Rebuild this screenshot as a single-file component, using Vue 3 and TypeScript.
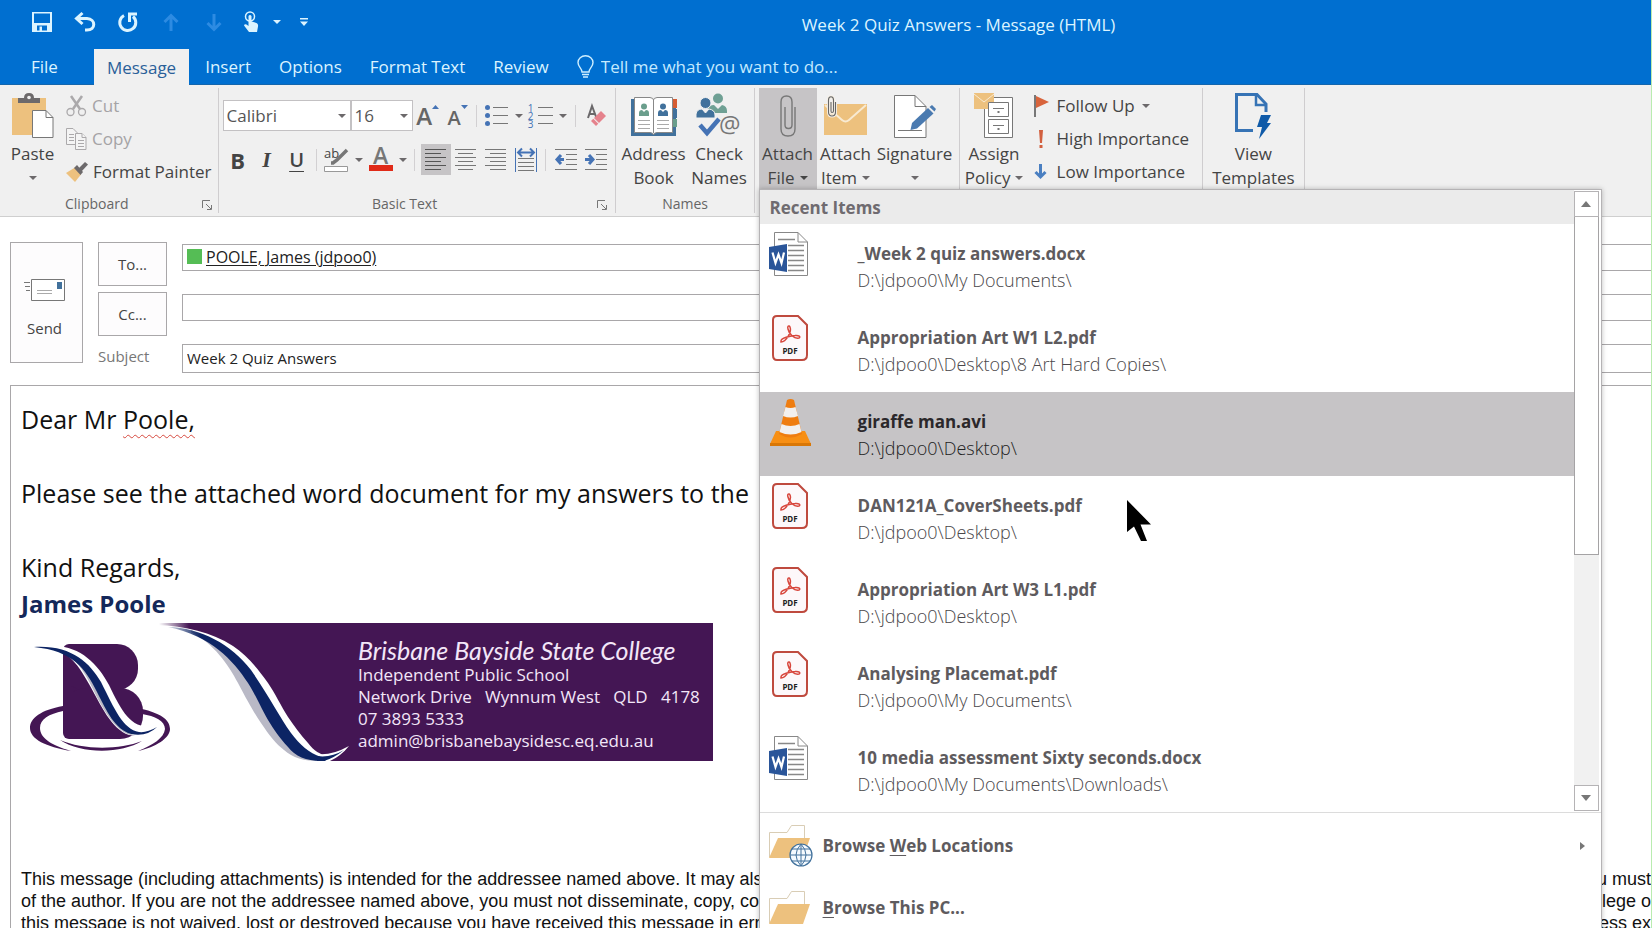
<script setup lang="ts">
import { ref } from 'vue'

type FileKind = 'word' | 'pdf' | 'video'
interface RecentItem { name: string; path: string; kind: FileKind }

const tabs = ['Insert', 'Options', 'Format Text', 'Review']

const recentItems: RecentItem[] = [
  { name: '_Week 2 quiz answers.docx', path: 'D:\\jdpoo0\\My Documents\\', kind: 'word' },
  { name: 'Appropriation Art W1 L2.pdf', path: 'D:\\jdpoo0\\Desktop\\8 Art Hard Copies\\', kind: 'pdf' },
  { name: 'giraffe man.avi', path: 'D:\\jdpoo0\\Desktop\\', kind: 'video' },
  { name: 'DAN121A_CoverSheets.pdf', path: 'D:\\jdpoo0\\Desktop\\', kind: 'pdf' },
  { name: 'Appropriation Art W3 L1.pdf', path: 'D:\\jdpoo0\\Desktop\\', kind: 'pdf' },
  { name: 'Analysing Placemat.pdf', path: 'D:\\jdpoo0\\My Documents\\', kind: 'pdf' },
  { name: '10 media assessment Sixty seconds.docx', path: 'D:\\jdpoo0\\My Documents\\Downloads\\', kind: 'word' },
]
const active = ref(2)

const legal = [
  ['This message (including attachments) is intended for the addressee named above. It may also', 'you must'],
  ['of the author. If you are not the addressee named above, you must not disseminate, copy, communicate', 'privilege o'],
  ['this message is not waived, lost or destroyed because you have received this message in error', 'unless ex'],
]
const address = 'Network Drive \u00a0 Wynnum West \u00a0 QLD \u00a0 4178'
const subject = ref('Week 2 Quiz Answers')
const cc = ref('')
</script>

<template>
  <div class="window">
    <header class="chrome">
      <div class="titlebar">
        <button class="qat" aria-label="Save">
          <svg width="20" height="20" viewBox="0 0 20 20"><path d="M0 0H20V20H0Z" fill="#dcf4ff" /><path d="M2 1.500H18V11H2Z" fill="#006fd0" /><path d="M5 13.500H15V18.500H5Z" fill="#006fd0" /><path d="M7.500 14.500H10V19H7.500Z" fill="#dcf4ff" /></svg>
        </button>
        <button class="qat" aria-label="Undo">
          <svg width="22" height="20" viewBox="0 0 22 20" fill="none" stroke="#dcf4ff" stroke-width="3"><path d="M2 6.500H13C22 7 22 18 13 18H11" /><path d="M8.500 1L2.500 6.500L8.500 12" /></svg>
        </button>
        <button class="qat" aria-label="Redo">
          <svg width="20" height="20" viewBox="0 0 20 20" fill="none" stroke="#dcf4ff" stroke-width="3"><path d="M6 3.500A8 8 0 1 0 15 4.500" /><path d="M11.500 10V2H19" /></svg>
        </button>
        <button class="qat" aria-label="Previous item" disabled>
          <svg width="16" height="19" viewBox="0 0 16 19" fill="none" stroke="#2d8be2" stroke-width="3"><path d="M8 18V2M1.500 9L8 2.500L14.500 9" /></svg>
        </button>
        <button class="qat" aria-label="Next item" disabled>
          <svg width="16" height="19" viewBox="0 0 16 19" fill="none" stroke="#2d8be2" stroke-width="3"><path d="M8 1V17M1.500 10L8 16.500L14.500 10" /></svg>
        </button>
        <button class="qat touch" aria-label="Touch mode">
          <svg width="16" height="22" viewBox="0 0 16 22"><circle cx="7" cy="5.500" r="4.500" fill="none" stroke="#dcf4ff" stroke-width="1.500" /><path d="M5.500 5Q7 3 8.500 5V10.500L13.500 12Q15.500 13 15 15.500L14 21H6L1 14.500Q1.500 12.500 3.500 13.500L5.500 15Z" fill="#dcf4ff" /></svg>
          <svg class="caret light" width="8" height="4" viewBox="0 0 8 4"><path d="M0 0H8L4 4Z" /></svg>
        </button>
        <button class="qat custom" aria-label="Customize toolbar">
          <svg width="8" height="8" viewBox="0 0 8 8" fill="#dcf4ff"><path d="M0 0H8V1.500H0ZM0 3.500H8L4 8Z" /></svg>
        </button>
        <h1>Week 2 Quiz Answers - Message (HTML)</h1>
      </div>
      <nav class="tabs">
        <button class="tab file">File</button>
        <button class="tab current">Message</button>
        <button v-for="tab in tabs" :key="tab" class="tab">{{ tab }}</button>
        <label class="tell">
          <svg width="17" height="23" viewBox="0 0 17 23" fill="none" stroke="#cdeeff" stroke-width="1.400"><path d="M5 17C5 13 1 12 1 7.500A7.500 6.800 0 0 1 16 7.500C16 12 12 13 12 17Z" /><path d="M5 19.500H12M6 22H11" /></svg>
          <input type="text" placeholder="Tell me what you want to do..." aria-label="Tell me what you want to do" />
        </label>
      </nav>
    </header>

    <div class="ribbon">
      <section class="group clipboard">
        <div class="controls">
          <button class="big paste">
            <span class="pic"><svg width="42" height="46" viewBox="0 0 42 46"><path d="M0 5H34V42H0Z" fill="#edc17e" /><path d="M6 10V5H12Q12 0 17 0Q22 0 22 5H28V10Z" fill="#6c696b" /><circle cx="17" cy="4.500" r="1.800" fill="#f0f0f0" /><path d="M20.500 17.500H34L41 24.500V44.500H20.500Z" fill="#fff" stroke="#777" /><path d="M34 17.500V24.500H41" fill="none" stroke="#777" /></svg></span>
            <span>Paste</span>
            <svg class="caret" width="8" height="4" viewBox="0 0 8 4"><path d="M0 0H8L4 4Z" /></svg>
          </button>
          <div class="stack">
            <button class="small" disabled>
              <svg width="21" height="22" viewBox="0 0 21 22" fill="none" stroke="#aba9ab" stroke-width="2"><path d="M5 1L14 14M16 1L7 14" stroke-width="2.500" /><circle cx="4.500" cy="17" r="3.500" stroke-width="1.300" /><circle cx="16" cy="17" r="3.500" stroke-width="1.300" /></svg>Cut
            </button>
            <button class="small" disabled>
              <svg width="21" height="22" viewBox="0 0 21 22" fill="#f4f4f4" stroke="#aba9ab"><path d="M.5.500H7L11 4.500V16.500H.5Z" /><path d="M3 6.500H8M3 9.500H8M3 12.500H8" /><path d="M9.500 5.500H16L20 9.500V21.500H9.500Z" /><path d="M16 5.500V9.500H20M12 12.500H18M12 15.500H18M12 18.500H18" /></svg>Copy
            </button>
            <button class="small">
              <svg width="22" height="20" viewBox="0 0 22 20"><path d="M0 11L9 5.500L15 12.500L9 20Z" fill="#edc17e" /><path d="M8 6L11 3L17 10L14.500 13Z" fill="#6c696b" /><path d="M12.500 6.500L19 0L22 2.500L15.500 9.500Z" fill="#6c696b" /></svg>Format Painter
            </button>
          </div>
        </div>
        <div class="caption">Clipboard<button class="launcher" aria-label="Clipboard options"><svg width="10" height="10" viewBox="0 0 10 10" fill="none" stroke="#777"><path d="M.5 8V.5H8M4 4L9 9M9.500 5V9.500H5" /></svg></button></div>
      </section>

      <section class="group text">
        <div class="controls rows">
          <div class="row">
            <span class="combo font"><select aria-label="Font"><option>Calibri</option></select><svg class="caret" width="8" height="4" viewBox="0 0 8 4"><path d="M0 0H8L4 4Z" /></svg></span>
            <span class="combo size"><select aria-label="Font size"><option>16</option></select><svg class="caret" width="8" height="4" viewBox="0 0 8 4"><path d="M0 0H8L4 4Z" /></svg></span>
            <button class="tool grow" aria-label="Increase font size"><b>A</b><svg width="7" height="4" viewBox="0 0 7 4"><path d="M0 4H7L3.500 0Z" fill="#4573b5" /></svg></button>
            <button class="tool grow less" aria-label="Decrease font size"><b>A</b><svg width="7" height="4" viewBox="0 0 7 4"><path d="M0 0H7L3.500 4Z" fill="#4573b5" /></svg></button>
            <i class="rule r8"></i>
            <button class="tool list" aria-label="Bullets"><svg width="23" height="21" viewBox="0 0 23 21"><g fill="#4573b5"><circle cx="2.500" cy="2.500" r="2.500" /><circle cx="2.500" cy="10.500" r="2.500" /><circle cx="2.500" cy="18.500" r="2.500" /></g><path d="M8 2.500H23M8 10.500H23M8 18.500H23" stroke="#777" /></svg></button>
            <button class="drop" aria-label="Bullet options"><svg class="caret" width="8" height="4" viewBox="0 0 8 4"><path d="M0 0H8L4 4Z" /></svg></button>
            <button class="tool list" aria-label="Numbering"><span class="digits"><span>1</span><span>2</span><span>3</span></span><svg width="15" height="21" viewBox="0 0 15 21"><path d="M0 2.500H15M0 10.500H15M0 18.500H15" stroke="#777" /></svg></button>
            <button class="drop" aria-label="Numbering options"><svg class="caret" width="8" height="4" viewBox="0 0 8 4"><path d="M0 0H8L4 4Z" /></svg></button>
            <i class="rule r14"></i>
            <button class="tool clear" aria-label="Clear formatting"><svg width="19" height="21" viewBox="0 0 19 21"><path d="M1 13L5 1L9.500 13M2.500 9H8" fill="none" stroke="#6a686a" stroke-width="2" /><path d="M14 6L19 11L12 18L7 13Z" fill="#e5828c" /><path d="M6.300 13.700L11.300 18.700L9 21L4 16Z" fill="#e5828c" /></svg></button>
          </div>
          <div class="row">
            <button class="tool bold">B</button>
            <button class="tool italic">I</button>
            <button class="tool under">U</button>
            <i class="rule r8"></i>
            <button class="tool w32" aria-label="Highlight"><svg width="25" height="24" viewBox="0 0 25 24"><text x="0" y="10" font-family="Open Sans, sans-serif" font-size="13" fill="#444">ab</text><path d="M23 2L13 12L9 15L7 15" fill="none" stroke="#777" stroke-width="3.500" /><path d="M.5 18.500H23.500V23.500H.5Z" fill="#fff" stroke="#999" /></svg></button>
            <button class="drop" aria-label="Highlight colours"><svg class="caret" width="8" height="4" viewBox="0 0 8 4"><path d="M0 0H8L4 4Z" /></svg></button>
            <button class="tool w32 colour" aria-label="Font colour">A</button>
            <button class="drop" aria-label="Font colours"><svg class="caret" width="8" height="4" viewBox="0 0 8 4"><path d="M0 0H8L4 4Z" /></svg></button>
            <i class="rule r12"></i>
            <button class="tool on" aria-label="Align left"><svg width="21" height="22" viewBox="0 0 21 22" stroke="#555"><path d="M0 .5H21M0 4.500H16M0 8.500H21M0 12.500H16M0 16.500H21M0 20.500H16" /></svg></button>
            <button class="tool" aria-label="Centre"><svg width="21" height="22" viewBox="0 0 21 22" stroke="#777"><path d="M0 .5H21M3 4.500H18M0 8.500H21M3 12.500H18M0 16.500H21M3 20.500H18" /></svg></button>
            <button class="tool" aria-label="Align right"><svg width="21" height="22" viewBox="0 0 21 22" stroke="#777"><path d="M0 .5H21M5 4.500H21M0 8.500H21M5 12.500H21M0 16.500H21M5 20.500H21" /></svg></button>
            <button class="tool" aria-label="Justify"><svg width="22" height="24" viewBox="0 0 22 24" fill="none" stroke="#777"><path d="M3 10.500H19M3 14.500H19M3 18.500H19M3 22.500H19" /><path d="M.5 0V24M21.500 0V24" stroke="#4573b5" /><path d="M3 4.500H19M7 .500L3 4.500L7 8.500M15 .500L19 4.500L15 8.500" stroke="#4573b5" stroke-width="2" /></svg></button>
            <i class="rule r10"></i>
            <button class="tool" aria-label="Decrease indent"><svg width="22" height="22" viewBox="0 0 22 22" fill="none" stroke="#777"><path d="M0 .5H22M11 5.500H22M11 10.500H22M11 15.500H22M0 20.500H22" /><path d="M9 10.500H3M6 6L2 10.500L6 15" stroke="#4573b5" stroke-width="3" /></svg></button>
            <button class="tool" aria-label="Increase indent"><svg width="22" height="22" viewBox="0 0 22 22" fill="none" stroke="#777"><path d="M0 .5H22M11 5.500H22M11 10.500H22M11 15.500H22M0 20.500H22" /><path d="M0 10.500H6M4 6L8 10.500L4 15" stroke="#4573b5" stroke-width="3" /></svg></button>
          </div>
        </div>
        <div class="caption">Basic Text<button class="launcher" aria-label="Basic text options"><svg width="10" height="10" viewBox="0 0 10 10" fill="none" stroke="#777"><path d="M.5 8V.5H8M4 4L9 9M9.500 5V9.500H5" /></svg></button></div>
      </section>

      <section class="group names">
        <div class="controls">
          <button class="big address">
            <span class="pic"><svg width="46" height="40" viewBox="0 0 46 40"><path d="M0 3H45V40H0Z" fill="#41719c" /><path d="M42 3H46V12H42Z" fill="#d55c33" /><path d="M42 13H46V22H42Z" fill="#41719c" /><path d="M42 23H46V31H42Z" fill="#6a9e8c" /><path d="M3.500 1.500H19Q22.500 2 22.500 4Q22.500 2 26 1.500H41.500V36.500H26Q22.500 37 22.500 39Q22.500 37 19 36.500H3.500Z" fill="#fff" stroke="#888" /><path d="M22.500 4V37" stroke="#888" /><circle cx="13" cy="10.500" r="3" fill="#6a9e8c" /><path d="M8 20V17Q8 14 11 14L13 16L15 14Q18 14 18 17V20Z" fill="#6a9e8c" /><circle cx="32" cy="10.500" r="3" fill="#41719c" /><path d="M27 20V17Q27 14 30 14L32 16L34 14Q37 14 37 17V20Z" fill="#41719c" /><path d="M7 24.500H19M7 28.500H19M7 32.500H19M26 24.500H38M26 28.500H38M26 32.500H38" stroke="#aaa" /></svg></span>
            <span>Address</span><span>Book</span>
          </button>
          <button class="big check">
            <span class="pic"><svg width="46" height="46" viewBox="0 0 46 46"><g fill="#6fa094"><circle cx="22" cy="5.500" r="5" /><path d="M12 20V17Q13 12 18 12L22 16L26 12Q31 13 31 18V20Z" /></g><circle cx="9.500" cy="10" r="5.500" fill="#41719c" stroke="#f0f0f0" /><path d="M0 25V21Q1 16 6 16L9.500 20L13 16Q19 17 19 22V25Z" fill="#41719c" stroke="#f0f0f0" /><path d="M4 32L11 40L23 26" fill="none" stroke="#4573b5" stroke-width="4.500" /><text x="23" y="40" font-family="Open Sans, sans-serif" font-size="24" fill="#777">@</text></svg></span>
            <span>Check</span><span>Names</span>
          </button>
        </div>
        <div class="caption">Names</div>
      </section>

      <section class="group include">
        <div class="controls">
          <div class="anchor">
            <button class="big attach open" aria-haspopup="menu" aria-expanded="true">
              <span class="pic"><svg width="16" height="42" viewBox="0 0 16 42" fill="none" stroke="#777" stroke-width="1.400"><path d="M15 12V34Q15 41 8 41Q1 41 1 34V7Q1 1 6.500 1Q12 1 12 7V30Q12 33.500 8.500 33.500Q5 33.500 5 30V12" /></svg></span>
              <span>Attach</span>
              <span class="with">File<svg class="caret dark" width="8" height="4" viewBox="0 0 8 4"><path d="M0 0H8L4 4Z" /></svg></span>
            </button>

            <div class="menu" role="menu">
              <div class="recent">
                <div class="entries">
                  <h2>Recent Items</h2>
                  <button v-for="(item, i) in recentItems" :key="item.name" class="entry" :class="{ active: i === active }" role="menuitem" @mouseenter="active = i">
                    <svg v-if="item.kind === 'word'" width="40" height="44" viewBox="0 0 40 44"><path d="M5.500.500H29L38.500 10V43.500H5.500Z" fill="#fff" stroke="#888" /><path d="M29 .500V10H38.500" fill="none" stroke="#888" /><path d="M9 7.500H26M19 13.500H35M19 18.500H35M19 23.500H35M19 28.500H35M19 33.500H35M19 38.500H35" stroke="#888" stroke-width="1.500" /><path d="M0 15L18 12V40L0 37Z" fill="#2a5599" /><path d="M3.500 20.500L6.500 31L9.500 22.500L12.500 31L15 20.500" fill="none" stroke="#fff" stroke-width="2.200" /></svg>
                    <svg v-else-if="item.kind === 'pdf'" class="inset" width="36" height="46" viewBox="0 0 36 46"><path d="M5 1H26L35 10V40Q35 45 30 45H5Q1 45 1 40V5Q1 1 5 1Z" fill="#fdf8fa" stroke="#bf4a3e" stroke-width="2" /><path d="M9 27C14 27 20 17 18 12C17 10 15 11 16 14C17 19 22 24 27 23C29 22 27 20 23 20.500C18 21 9 23 9 26Z" fill="none" stroke="#d8473d" stroke-width="1.500" /><text x="18" y="39" text-anchor="middle" font-family="Noto Sans, sans-serif" font-size="8" font-weight="700" fill="#222">PDF</text></svg>
                    <svg v-else class="cone" width="41" height="47" viewBox="0 0 41 47"><path d="M6 32H35L41 45H0Z" fill="#f78f14" /><path d="M0 44H41V47H0Z" fill="#d97706" /><path d="M17 1Q20.500-1 24 1L32 35Q20.500 42 9 35Z" fill="#ef7d10" /><path d="M15.500 8Q20.500 10 25.500 8L28 17Q20.500 20 13 17ZM11.500 25Q20.500 29 29.500 25L31.500 33Q20.500 38 9.500 33Z" fill="#f2f0ef" /></svg>
                    <span class="name">{{ item.name }}</span>
                    <span class="path">{{ item.path }}</span>
                  </button>
                </div>
                <div class="scroll">
                  <button aria-label="Scroll up"><svg width="10" height="6" viewBox="0 0 10 6"><path d="M0 6H10L5 0Z" fill="#777" /></svg></button>
                  <div class="thumb"></div>
                  <div class="track"></div>
                  <button aria-label="Scroll down"><svg width="10" height="6" viewBox="0 0 10 6"><path d="M0 0H10L5 6Z" fill="#777" /></svg></button>
                </div>
              </div>
              <button class="browse" role="menuitem">
                <svg width="44" height="42" viewBox="0 0 44 42"><path d="M.5 32V7.500H18L22.500.500H35.500V13" fill="#fff" stroke="#d9cdb5" /><path d="M0 33L9 13H41L34 33Z" fill="#edc17e" /><circle cx="32" cy="30" r="11" fill="#f6fbff" stroke="#41719c" stroke-width="1.200" /><path d="M32 19V41M21 30H43M23 24H41M23 36H41M32 19Q22 30 32 41M32 19Q42 30 32 41" fill="none" stroke="#41719c" /></svg>
                <span>Browse <u>W</u>eb Locations</span>
                <svg class="more" width="5" height="8" viewBox="0 0 5 8"><path d="M0 0V8L5 4Z" fill="#777" /></svg>
              </button>
              <button class="browse" role="menuitem">
                <svg width="44" height="34" viewBox="0 0 44 34"><path d="M.5 32V7.500H18L22.500.500H35.500V13" fill="#fff" stroke="#d9cdb5" /><path d="M0 33L9 13H41L34 33Z" fill="#edc17e" /></svg>
                <span><u>B</u>rowse This PC...</span>
              </button>
            </div>
          </div>
          <button class="big attach">
            <span class="pic"><svg width="43" height="40" viewBox="0 0 43 40"><path d="M0 8H43V39H0Z" fill="#edc17e" /><path d="M1 9L18 24Q21.500 27 25 24L42 9" fill="none" stroke="#f8ead2" stroke-width="2" /><path d="M11.500 6V16Q11.500 20 8 20Q4.500 20 4.500 16V4Q4.500 .700 7 .700Q9.500 .700 9.500 4V15Q9.500 16.500 8 16.500Q7 16.500 7 15V6" fill="none" stroke="#f6f0e6" stroke-width="3" /><path d="M11.500 6V16Q11.500 20 8 20Q4.500 20 4.500 16V4Q4.500 .700 7 .700Q9.500 .700 9.500 4V15Q9.500 16.500 8 16.500Q7 16.500 7 15V6" fill="none" stroke="#666" stroke-width="1.100" /></svg></span>
            <span>Attach</span>
            <span class="with">Item<svg class="caret" width="8" height="4" viewBox="0 0 8 4"><path d="M0 0H8L4 4Z" /></svg></span>
          </button>
          <button class="big signature">
            <span class="pic"><svg width="42" height="43" viewBox="0 0 42 43"><path d="M.5.500H21L32 11.500V42.500H.5Z" fill="#fff" stroke="#777" /><path d="M21 .500V11.500H32M4 35.500H28" fill="none" stroke="#777" /><path d="M16.500 35L18 28L34 13L39.500 18.500L23 33.500Z" fill="#4a7ab0" /><path d="M35.500 12L38 10L42 14L40.500 16.500Z" fill="#4a7ab0" /></svg></span>
            <span>Signature</span>
            <svg class="caret" width="8" height="4" viewBox="0 0 8 4"><path d="M0 0H8L4 4Z" /></svg>
          </button>
        </div>
      </section>

      <section class="group tags">
        <div class="controls">
          <button class="big policy">
            <span class="pic"><svg width="40" height="46" viewBox="0 0 40 46"><path d="M10.500 4.500H38.500V44.500H10.500Z" fill="#fff" stroke="#777" /><path d="M14.500 9.500H34.500V23.500H14.500ZM14.500 26.500H34.500V40.500H14.500Z" fill="#fff" stroke="#777" /><path d="M19 15.500H30M19 32.500H30" stroke="#777" /><path d="M23.500 18H25.500V20H23.500ZM23.500 35H25.500V37H23.500Z" fill="#777" /><path d="M0 0H20V9H14V16H0Z" fill="#edc17e" /><path d="M0 1L10 9L20 1" fill="none" stroke="#f8ead2" /></svg></span>
            <span>Assign</span>
            <span class="with">Policy<svg class="caret" width="8" height="4" viewBox="0 0 8 4"><path d="M0 0H8L4 4Z" /></svg></span>
          </button>
          <div class="stack">
            <button class="small"><svg width="20" height="22" viewBox="0 0 20 22"><path d="M1 0H3V22H1Z" fill="#777" /><path d="M3 1L16 7L3 13Z" fill="#d8643c" /></svg>Follow Up<svg class="caret" width="8" height="4" viewBox="0 0 8 4"><path d="M0 0H8L4 4Z" /></svg></button>
            <button class="small"><svg width="20" height="20" viewBox="0 0 20 20" fill="#d2603f"><path d="M6 1H10L9 14H7ZM6.500 16H9.500V19H6.500Z" /></svg>High Importance</button>
            <button class="small"><svg width="20" height="16" viewBox="0 0 20 16" fill="none" stroke="#4a7fc1" stroke-width="3"><path d="M7.500 0V13M2.500 8L7.500 13L12.500 8" /></svg>Low Importance</button>
          </div>
        </div>
      </section>

      <section class="group templates">
        <div class="controls">
          <button class="big view">
            <span class="pic"><svg width="37" height="46" viewBox="0 0 37 46" fill="none" stroke="#3673b5" stroke-width="3"><path d="M18 37.500H1.500V1.500H22L31 11V19" /><path d="M21 2V12H31" stroke-width="2.500" /><path d="M26 22H36L32 30H36L24 46L27 34H22Z" fill="#0f5aa8" stroke="none" /></svg></span>
            <span>View</span><span>Templates</span>
          </button>
        </div>
      </section>
    </div>

    <section class="envelope">
      <button class="send">
        <svg width="41" height="22" viewBox="0 0 41 22"><path d="M7.500.500H40.500V21.500H7.500Z" fill="#fff" stroke="#777" /><path d="M33 3H38V10H33Z" fill="#41719c" /><path d="M13 11.500H28M13 14.500H28" stroke="#aaa" /><path d="M0 3.500H6M1 7.500H6M2 11.500H6" stroke="#777" /></svg>
        <span>Send</span>
      </button>
      <button class="pick">To...</button>
      <div class="field"><span class="presence"></span><a href="#">POOLE, James (jdpoo0)</a></div>
      <button class="pick">Cc...</button>
      <input v-model="cc" class="field" aria-label="Cc" />
      <label for="subject">Subject</label>
      <input id="subject" v-model="subject" class="field tall" />
    </section>

    <article class="body">
      <p>Dear Mr <span class="misspelt">Poole,</span></p>
      <p><br /></p>
      <p>Please see the attached word document for my answers to the</p>
      <p><br /></p>
      <p>Kind Regards,</p>
      <p class="sender">James Poole</p>
      <div class="banner">
        <svg width="692" height="138" viewBox="0 3 692 138">
          <defs>
            <linearGradient id="fade" x1="138" x2="168" y1="0" y2="0" gradientUnits="userSpaceOnUse"><stop offset="0" stop-color="#441654" stop-opacity="0" /><stop offset="1" stop-color="#441654" /></linearGradient>
            <linearGradient id="ribbon" x1="140" x2="180" y1="0" y2="0" gradientUnits="userSpaceOnUse"><stop offset="0" stop-color="#0c2464" stop-opacity="0" /><stop offset="1" stop-color="#0c2464" /></linearGradient>
          </defs>
          <path d="M135 3H692V141H300L307 137C299 134 293 131 287 123C279 114 273 106 267 97C260 86 254 73 247 63C235 46 225 35 212 26C190 12 165 6 135 5Z" fill="url(#fade)" />
          <path d="M170 12C193 24 207 44 217 63C227 82 232 91 240 103C248 115 255 124 263 130C272 138 282 141 300 141L270 120L234 66C216 38 195 20 170 10Z" fill="#b9b9c6" />
          <path d="M147 7C180 8 210 24 230 50C248 76 258 96 270 113C279 125 288 133 300 137Q306 138 314 136L306 141H300C285 141 274 136 267 127C258 117 253 110 247 100C238 84 234 74 227 63C212 40 190 16 147 7Z" fill="url(#ribbon)" />
          <path d="M296 134Q310 136 328 126Q320 136 309 141H305Z" fill="#fff" />
          <path d="M296 136Q310 138 323 130Q313 138 303 141H296Z" fill="#0c2464" />
          <g fill="#441654">
            <path d="M42 86C20 90 9 98 9 108C9 119 25 127 50 131C30 125 19 118 19 108C19 99 28 94 42 91Z" />
            <path d="M121 89C138 93 149 99 149 109C149 118 135 127 117 131C132 125 143 118 144 109C144 101 134 96 121 94Z" />
            <path d="M39 120C60 134 100 134 121 121C98 130 62 130 39 120Z" />
            <rect x="42" y="24" width="50" height="95" rx="6" />
            <rect x="42" y="24" width="75" height="46" rx="21" />
            <rect x="42" y="68" width="80" height="51" rx="23" />
          </g>
          <path d="M25 27C55 22 76 42 88 65C102 94 110 109 135 107Q126 117 108 115C90 109 80 85 68 64C56 42 44 28 25 27Z" fill="#fff" />
          <path d="M40 32C60 40 68 62 78 81C90 103 100 114 114 116C100 110 90 96 80 76C70 55 60 36 40 30Z" fill="#b9b9c6" />
          <path d="M13 27C50 25 68 42 80 62C94 90 102 109 118 112Q126 113 136 107Q126 117 110 114C94 109 86 92 76 72C64 48 52 31 13 27Z" fill="#0c2464" />
        </svg>
        <div class="details">
          <span class="college">Brisbane Bayside State College</span>
          <span>Independent Public School</span>
          <span>{{ address }}</span>
          <span>07 3893 5333</span>
          <span>admin@brisbanebaysidesc.eq.edu.au</span>
        </div>
      </div>
      <div class="legal">
        <div v-for="line in legal" :key="line[0]"><span>{{ line[0] }}</span><span>{{ line[1] }}</span></div>
      </div>
    </article>

    <svg class="pointer" width="25" height="42" viewBox="0 0 25 42"><path d="M0 0L24 24.500H13.500L20 41H14L7 26.500L0 32Z" fill="#000" /></svg>
  </div>
</template>

<style>
body { margin: 0; overflow: hidden; }
</style>

<style scoped>
* { box-sizing: border-box; }
.window { position: relative; display: flex; flex-direction: column; height: 100vh; overflow: hidden; background: #fff; border-right: 1px solid #b9ecb0; color: #444; font: 17px/24px "Open Sans", "Noto Sans", sans-serif; }
button, input, select { margin: 0; padding: 0; border: 0; background: none; color: inherit; font: inherit; outline: 0; }
svg { display: block; flex: none; overflow: visible; }
h1, h2, p { margin: 0; font: inherit; }
.caret { fill: #6c696b; }
.caret.light { fill: #dcf4ff; }
.caret.dark { fill: #444; }

.chrome { background: #006fd0; color: #dcf4ff; border-bottom: 1px solid #1466ad; }
.titlebar { display: flex; height: 49px; padding-left: 20px; }
.qat { display: flex; align-items: center; justify-content: center; width: 43px; height: 44px; }
.touch { width: 48px; gap: 14px; padding-left: 6px; }
.custom { margin-left: 7px; width: 28px; }
h1 { flex: 1; padding-right: 52px; text-align: center; line-height: 49px; }
.tabs { display: flex; height: 35px; padding-left: 17px; }
.tab { padding: 0 14px; line-height: 35px; }
.tab.file { margin-right: 22px; }
.tab.current { padding: 0 13px; background: #f0f0f0; color: #2a6099; margin-bottom: -1px; margin-right: 2px; }
.tell { display: flex; align-items: center; gap: 7px; margin-left: 14px; }
.tell input { width: 260px; height: 35px; }
.tell input::placeholder { color: #c4eaff; opacity: 1; }

.ribbon { position: relative; z-index: 2; display: flex; align-items: flex-start; height: 132px; padding-top: 3px; background: #f0f0f0; border-bottom: 1px solid #cfcfcf; }
.group { height: 125px; border-right: 1px solid #cfcdcf; }
.controls { display: flex; height: 102px; }
.caption { position: relative; font-size: 14px; line-height: 28px; text-align: center; color: #666; }
.launcher { position: absolute; right: 6px; top: 10px; }
.big { display: flex; flex-direction: column; align-items: center; height: 102px; white-space: nowrap; }
.big > span:not(.pic) { height: 24px; }
.big > .caret { margin-top: 10px; }
.pic { display: flex; align-items: center; height: 54px; padding-top: 2px; }
.with { display: flex; align-items: center; gap: 5px; }
.stack { padding-top: 1px; }
.small { display: flex; align-items: center; gap: 5px; height: 33px; white-space: nowrap; }
.small:disabled { color: #a5a3a5; }

.clipboard { padding: 0 6px 0 8px; }
.clipboard .caption { margin: 0 -6px 0 -8px; padding-right: 24px; }
.paste { width: 49px; margin-right: 9px; }
.text { padding: 0 4px; }
.text .caption { margin-right: -2px; padding-right: 26px; }
.rows { flex-direction: column; gap: 13px; padding-top: 12px; }
.row { display: flex; height: 31px; }
.combo { position: relative; display: flex; align-items: center; background: #fff; border: 1px solid #c3c1c3; color: #555; }
.combo select { width: 100%; height: 29px; padding-left: 3px; appearance: none; }
.combo .caret { position: absolute; right: 4px; }
.combo.font { width: 128px; }
.combo.size { width: 62px; }
.tool { display: flex; align-items: center; justify-content: center; width: 30px; }
.tool.list { width: 32px; }
.tool.w32 { width: 32px; }
.tool.clear { width: 28px; }
.tool.bold { font-weight: 700; font-size: 22px; }
.tool.italic { width: 28px; font: italic 700 22px/24px "Liberation Serif", serif; }
.tool.under { width: 32px; font-weight: 600; font-size: 20px; text-decoration: underline; text-decoration-thickness: 1px; text-underline-offset: 4px; }
.tool.on { background: #c6c4c6; }
.grow { align-items: flex-start; color: #666; font-size: 24px; line-height: 31px; }
.grow b { font-weight: 600; }
.grow svg { margin-top: 5px; }
.grow.less { font-size: 20px; line-height: 35px; }
.colour { position: relative; font-size: 23px; font-weight: 600; line-height: 22px; align-items: flex-start; color: #777; }
.colour::after { content: ""; position: absolute; left: 4px; right: 4px; bottom: 4px; height: 6px; background: #e02a18; }
.drop { display: flex; align-items: center; justify-content: center; width: 12px; }
.digits { display: grid; margin-right: 5px; font-size: 10px; line-height: 8px; color: #4573b5; }
.rule { height: 22px; align-self: center; background: linear-gradient(#d2d0d2, #d2d0d2) center / 1px 100% no-repeat; }
.r8 { width: 8px; }
.r10 { width: 10px; }
.r12 { width: 12px; }
.r14 { width: 14px; }
.names { padding: 0 3px 0 4px; }
.address { width: 68px; }
.check { width: 63px; }
.include { padding: 0 4px; }
.anchor { position: relative; }
.attach { width: 58px; }
.attach.open { background: #c6c4c6; }
.signature { width: 80px; }
.tags { padding: 0 13px 0 4px; }
.policy { width: 61px; margin-right: 8px; }
.tags .small { gap: 4px; }
.tags .small .caret { margin-left: 3px; }
.templates { padding: 0 9px; }

.menu { position: absolute; left: 0; top: 101px; width: 843px; height: 760px; background: #fff; border: 1px solid #b5b3b5; box-shadow: 0 0 5px rgba(0, 0, 0, .25); color: #5e5b5e; }
.recent { display: flex; padding-right: 2px; border-bottom: 1px solid #dcdcdc; }
.entries { flex: 1; }
h2 { padding: 2px 10px 0; line-height: 32px; font-weight: 700; background: #ebebeb; color: #6f6b70; }
.entry { display: grid; grid-template: 27px 27px / 89px 1fr; width: 100%; height: 84px; padding: 16px 0 0 9px; line-height: 27px; text-align: left; }
.entry svg { grid-row: 1 / 3; margin-top: -8px; }
.entry .inset { margin-left: 3px; margin-top: -9px; }
.entry .cone { margin-left: 1px; margin-top: -9px; }
.name { font-weight: 700; }
.path { font-size: 18px; font-weight: 300; color: #4a474a; }
.entry.active { background: #c6c4c6; color: #2b282b; }
.entry.active .path { color: #222; }
.scroll { display: flex; flex-direction: column; width: 25px; padding: 1px 0; }
.scroll button { display: flex; align-items: center; justify-content: center; height: 26px; border: 1px solid #b5b3b5; }
.thumb { flex: 338; border: 1px solid #a5a3a5; border-top: 0; }
.track { flex: 231; background: #f1f1f1; }
.browse { display: grid; grid-template-columns: 54px 1fr 5px; align-items: center; width: 100%; height: 62px; padding: 3px 16px 0 9px; font-weight: 700; text-align: left; }
.browse u { text-underline-offset: 3px; text-decoration-thickness: 1px; }

.envelope { display: grid; grid-template: 44px 44px 34px / 73px 69px 1fr; gap: 6px 15px; padding: 25px 0 9px 10px; font-size: 15px; }
.send { grid-row: 1 / 4; display: flex; flex-direction: column; align-items: center; justify-content: center; gap: 15px; margin-bottom: 13px; padding: 22px 4px 8px 0; border: 1px solid #a9a7a9; background: #fdfcfd; }
.pick { border: 1px solid #a9a7a9; background: #fdfcfd; }
.envelope label { line-height: 28px; color: #777; }
.field { display: flex; align-items: center; height: 27px; margin-top: 2px; padding: 0 0 2px 4px; border: 1px solid #a9a7a9; border-right: 0; color: #222; }
.field.tall { height: 29px; }
.field a { font-size: 16px; color: #222; text-underline-offset: 2px; text-decoration-thickness: 1px; }
.presence { width: 15px; height: 15px; margin-right: 4px; background: #55bd55; }

.body { flex: 1; margin-left: 10px; padding: 15px 0 0 10px; border: solid #a9a7a9; border-width: 1px 0 0 1px; color: #111; font-size: 25px; line-height: 37px; white-space: nowrap; overflow: hidden; }
.misspelt { text-decoration: underline wavy #d6493f 1px; text-underline-offset: 5px; }
.sender { font-size: 24px; line-height: 35px; font-weight: 700; color: #14285a; }
.banner { display: grid; margin-top: 2px; }
.banner svg, .details { grid-area: 1 / 1; }
.details { display: flex; flex-direction: column; padding: 14px 0 0 337px; color: #f3e6f8; font-size: 17px; font-weight: 500; line-height: 22px; }
.college { font: italic 400 25px/27px Lato, sans-serif; }
.legal { margin-top: 107px; font: 18px/22px "Liberation Sans", Arial, sans-serif; }
.legal div { display: flex; justify-content: space-between; }

.pointer { position: absolute; z-index: 3; left: 1127px; top: 500px; }
</style>
